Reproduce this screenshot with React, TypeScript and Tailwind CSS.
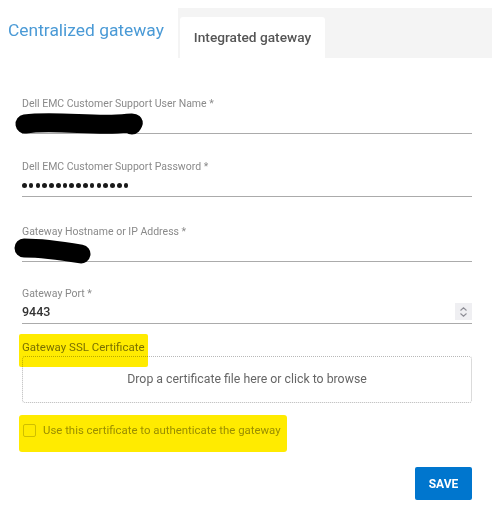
import React from 'react';

const font = { fontFamily: 'Roboto, "Noto Sans", sans-serif' };

// scribble used to black out the values in the original screenshot
const Redaction: React.FC<{ d: string; w: number; h: number; stroke: number; className: string }> = ({ d, w, h, stroke, className }) => (
  <svg width={w} height={h} viewBox={`0 0 ${w} ${h}`} className={`absolute pointer-events-none ${className}`}>
    <path d={d} stroke="#000" strokeWidth={stroke} strokeLinecap="round" fill="none" />
  </svg>
);

const Field: React.FC<{ label: string; children?: React.ReactNode; className?: string }> = ({ label, children, className = '' }) => (
  <div className={`relative ${className}`}>
    <div className="text-[10.5px] leading-[14px] text-[#8a8a8a]">{label}</div>
    <div className="h-[23px] flex items-center border-b border-[#ababab]">{children}</div>
  </div>
);

export default function App() {
  return (
    <div className="w-[492px] h-[531px] bg-white relative overflow-hidden" style={font}>
      {/* Tabs */}
      <div className="flex items-start pt-[8px] h-[58px]">
        <div className="w-[178px] pl-[8px] pt-[12px] text-[17.4px] leading-[20px] text-[#4a9ad6]">
          Centralized gateway
        </div>
        <div className="flex-1 h-[50px] bg-[#f4f4f4] pl-[2px] pt-[9px]">
          <div className="w-[145px] h-[41px] bg-white rounded-t-[3px] flex items-center justify-center text-[13.7px] font-medium text-[#555]">
            Integrated gateway
          </div>
        </div>
      </div>

      {/* Form */}
      <div className="pl-[22px] pr-[20px] pt-[39px]">
        <Field label="Dell EMC Customer Support User Name *">
          <Redaction w={140} h={32} stroke={19} className="left-[-10px] top-[13px]" d="M13 14 C 40 10, 80 16, 105 14 S 118 13, 120 15" />
        </Field>
        <Field label="Dell EMC Customer Support Password *" className="mt-[26px]">
          <span className="flex gap-[2.2px] pt-[1px]">
            {Array.from({ length: 16 }).map((_, i) => (
              <span key={i} className="w-[4.6px] h-[4.6px] rounded-full bg-[#1a1a1a]" />
            ))}
          </span>
        </Field>
        <Field label="Gateway Hostname or IP Address *" className="mt-[28px]">
          <Redaction w={90} h={32} stroke={19} className="left-[-10px] top-[13px]" d="M12 10 C 25 10, 45 12, 69 16" />
        </Field>
        <Field label="Gateway Port *" className="mt-[25px]">
          <span className="text-[12.5px] font-medium text-[#333]">9443</span>
          <span className="ml-auto w-[17px] h-[17px] mb-[1px] bg-[#efeff2] flex flex-col items-center justify-center">
            <svg width="9" height="12" viewBox="0 0 9 12" fill="none" stroke="#8d8d95" strokeWidth="1.1">
              <path d="M1.5 4.5 L4.5 1.8 L7.5 4.5" />
              <path d="M1.5 7.5 L4.5 10.2 L7.5 7.5" />
            </svg>
          </span>
        </Field>

        {/* SSL certificate */}
        <div className="mt-[16px] text-[11.5px] leading-[15px] text-[#7a7a7a]">Gateway SSL Certificate</div>
        <div className="mt-[1px] h-[47px] border border-dotted border-[#b8b8b8] rounded-[3px] flex items-center justify-center text-[12.3px] text-[#666]">
          Drop a certificate file here or click to browse
        </div>

        <div className="mt-[20px] flex items-center h-[15px]">
          <span className="w-[13px] h-[13px] ml-[1px] border border-[#cfcfcf] rounded-[2px] bg-white" />
          <span className="ml-[7px] text-[11.4px] text-[#9a9a9a]">Use this certificate to authenticate the gateway</span>
        </div>

        <div className="flex justify-end mt-[29px]">
          <button className="w-[57px] h-[33px] bg-[#0076ce] rounded-[2px] text-white text-[12px] font-bold">SAVE</button>
        </div>
      </div>

      {/* yellow highlighter marks */}
      <div className="absolute left-[19px] top-[334px] w-[129px] h-[33px] bg-[#ffeb00] mix-blend-multiply rounded-[2px]" />
      <div className="absolute left-[19px] top-[415px] w-[268px] h-[37px] bg-[#ffeb00] mix-blend-multiply rounded-[3px]" />
    </div>
  );
}
